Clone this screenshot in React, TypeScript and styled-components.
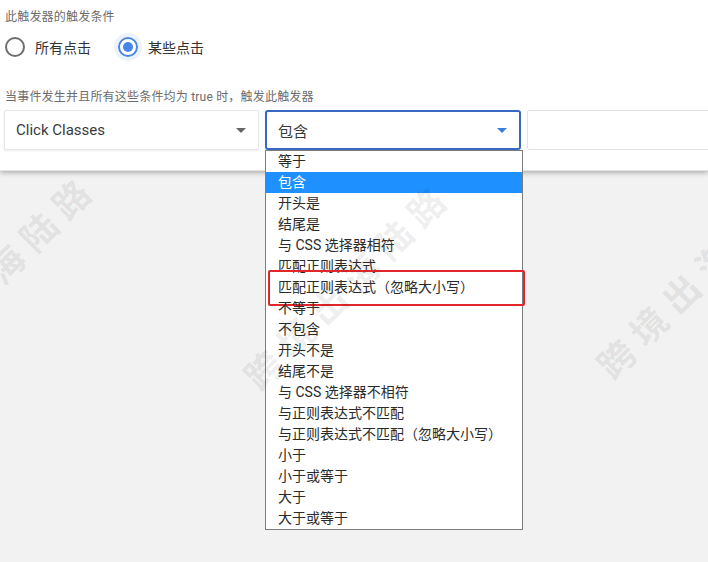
import React from "react";
import styled, { createGlobalStyle, css } from "styled-components";

const Global = createGlobalStyle`
  html, body { margin: 0; padding: 0; }
  body {
    background: #f2f2f2;
    font-family: Roboto, "Noto Sans CJK SC", sans-serif;
    overflow: hidden;
  }
`;

const Page = styled.div`
  position: relative;
  width: 708px;
  height: 562px;
  overflow: hidden;
  background: #f2f2f2;
`;

const Card = styled.div`
  display: flex;
  flex-direction: column;
  background: #fff;
  padding: 9px 0 20px 4px;
  box-shadow: 0 2px 5px rgba(0, 0, 0, 0.28);
  border-bottom: 1px solid #e4e4e4;
`;

const SectionLabel = styled.div<{ $gap?: number }>`
  margin: ${(p) => p.$gap ?? 0}px 0 0 1px;
  font-size: 12px;
  line-height: 16px;
  letter-spacing: 0.2px;
  color: #6b6b6b;
  font-family: Roboto, "Noto Sans CJK SC", sans-serif;
`;

const RadioRow = styled.div`
  display: flex;
  align-items: center;
  gap: 27px;
  margin: 12px 0 0 1px;
  height: 20px;
`;

const RadioOption = styled.label`
  display: flex;
  align-items: center;
  gap: 10px;
  font-size: 14px;
  color: #333;
  font-family: "Noto Sans CJK SC", sans-serif;
`;

const RadioCircle = styled.span<{ $checked?: boolean }>`
  position: relative;
  width: 20px;
  height: 20px;
  box-sizing: border-box;
  border-radius: 50%;
  border: 2px solid #6e6e6e;
  ${(p) =>
    p.$checked &&
    css`
      border-color: #4a86e8;
      box-shadow: 0 0 0 4px rgba(74, 134, 232, 0.1);
      &::after {
        content: "";
        position: absolute;
        left: 3px;
        top: 3px;
        width: 10px;
        height: 10px;
        border-radius: 50%;
        background: #4a86e8;
      }
    `}
`;

const FieldRow = styled.div`
  display: flex;
  gap: 6px;
  margin-top: 5px;
  height: 40px;
`;

const SelectBox = styled.div<{ $width: number; $focused?: boolean }>`
  position: relative;
  flex: none;
  display: flex;
  align-items: center;
  justify-content: space-between;
  box-sizing: border-box;
  width: ${(p) => p.$width}px;
  height: 40px;
  padding: 0 12px 0 11px;
  border-radius: 2px;
  font-size: 15px;
  color: #3a3a3a;
  font-family: Roboto, "Noto Sans CJK SC", sans-serif;
  background: #fff;
  ${(p) =>
    p.$focused
      ? css`
          border: 2px solid #3768c4;
          border-radius: 3px;
        `
      : css`
          border: 1px solid #e6e6e6;
          box-shadow: 0 1px 2px rgba(0, 0, 0, 0.08);
        `}
`;

const Arrow = styled.span<{ $blue?: boolean }>`
  width: 0;
  height: 0;
  border-left: 5px solid transparent;
  border-right: 5px solid transparent;
  border-top: 5px solid ${(p) => (p.$blue ? "#3f7ddb" : "#666")};
`;

const TextInput = styled.div`
  flex: none;
  width: 220px;
  height: 40px;
  box-sizing: border-box;
  border: 1px solid #e3e3e3;
  border-radius: 2px;
  background: #fff;
`;

const Listbox = styled.ul`
  position: absolute;
  top: 38px;
  left: -2px;
  width: 258px;
  box-sizing: border-box;
  margin: 0;
  padding: 0;
  list-style: none;
  background: #fff;
  border: 1px solid #7c7c7c;
  z-index: 5;
`;

const Option = styled.li<{ $selected?: boolean; $marked?: boolean }>`
  position: relative;
  height: 21px;
  line-height: 21px;
  padding-left: 12px;
  font-size: 14px;
  color: #2b2b2b;
  font-family: Roboto, "Noto Sans CJK SC", sans-serif;
  white-space: nowrap;
  ${(p) =>
    p.$selected &&
    css`
      background: #1e90ff;
      color: #fff;
    `}
  ${(p) =>
    p.$marked &&
    css`
      &::after {
        content: "";
        position: absolute;
        left: 2px;
        right: -3px;
        top: -7px;
        bottom: -8px;
        border: 2px solid #e3262b;
        border-radius: 2px;
      }
    `}
`;

const WatermarkLayer = styled.div`
  position: absolute;
  inset: 0;
  pointer-events: none;
  z-index: 10;
`;

const Watermark = styled.span<{ $x: number; $y: number }>`
  position: absolute;
  left: ${(p) => p.$x}px;
  top: ${(p) => p.$y - 18}px;
  transform-origin: 0 50%;
  transform: rotate(-45deg);
  font-family: "Noto Sans CJK SC", sans-serif;
  font-weight: 700;
  font-size: 36px;
  line-height: 36px;
  letter-spacing: 10px;
  white-space: nowrap;
  color: rgba(0, 0, 0, 0.08);
`;

const options = [
  "等于",
  "包含",
  "开头是",
  "结尾是",
  "与 CSS 选择器相符",
  "匹配正则表达式",
  "匹配正则表达式（忽略大小写）",
  "不等于",
  "不包含",
  "开头不是",
  "结尾不是",
  "与 CSS 选择器不相符",
  "与正则表达式不匹配",
  "与正则表达式不匹配（忽略大小写）",
  "小于",
  "小于或等于",
  "大于",
  "大于或等于",
];

const marks = [
  { x: -106, y: 373 },
  { x: 249, y: 381 },
  { x: 602, y: 370 },
];

export default function App() {
  return (
    <Page>
      <Global />
      <Card>
        <SectionLabel>此触发器的触发条件</SectionLabel>
        <RadioRow>
          <RadioOption>
            <RadioCircle />
            所有点击
          </RadioOption>
          <RadioOption>
            <RadioCircle $checked />
            某些点击
          </RadioOption>
        </RadioRow>
        <SectionLabel $gap={32}>当事件发生并且所有这些条件均为 true 时，触发此触发器</SectionLabel>
        <FieldRow>
          <SelectBox $width={255}>
            Click Classes
            <Arrow />
          </SelectBox>
          <SelectBox $width={256} $focused>
            包含
            <Arrow $blue />
            <Listbox>
              {options.map((o, i) => (
                <Option key={o} $selected={i === 1} $marked={i === 6}>
                  {o}
                </Option>
              ))}
            </Listbox>
          </SelectBox>
          <TextInput />
        </FieldRow>
      </Card>
      <WatermarkLayer>
        {marks.map((m, i) => (
          <Watermark key={i} $x={m.x} $y={m.y}>
            跨境出海陆路
          </Watermark>
        ))}
      </WatermarkLayer>
    </Page>
  );
}
